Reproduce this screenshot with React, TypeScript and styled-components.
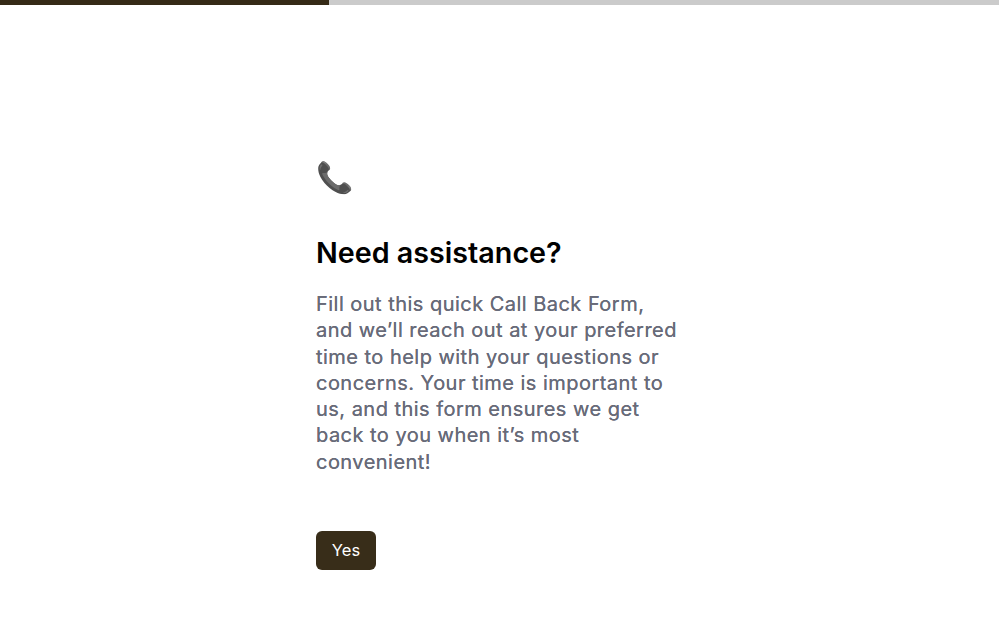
import React from 'react';
import styled, {createGlobalStyle} from 'styled-components';

const GlobalStyle = createGlobalStyle`
  html, body {
    background: #fff;
    margin: 0;
    padding: 0;
  }
`;

const Page = styled.div`
  display: flex;
  flex-direction: column;
  font-family: Inter, "Liberation Sans", sans-serif;
  height: 625px;
  overflow: hidden;
  width: 999px;
`;

const Track = styled.div`
  background: #cbcbcb;
  flex: none;
  height: 5px;
`;

const Fill = styled.div`
  background: #352a16;
  height: 100%;
`;

const Content = styled.main`
  display: flex;
  flex-direction: column;
  align-items: flex-start;
  padding: 155px 0 0 316px;
  width: 366px;
`;

const Emoji = styled.div`
  font-size: 30px;
  height: 42px;
  line-height: 34px;
  opacity: .93;
`;

const Title = styled.h1`
  color: #000;
  font-size: 28.7px;
  font-weight: 600;
  line-height: 36px;
  margin: 33px 0 0;
`;

const Text = styled.p`
  color: #686b79;
  font-size: 20px;
  font-weight: 400;
  letter-spacing: .47px;
  line-height: 26.25px;
  margin: 20px 0 0;
  text-shadow: 0 0 .5px #686b79;
`;

const YesButton = styled.button`
  background: #382d19;
  border: 0;
  border-radius: 6px;
  color: #fff;
  font-family: inherit;
  font-size: 16.5px;
  font-weight: 400;
  height: 39px;
  margin-top: 56px;
  padding: 0;
  width: 60px;
`;

export default function App () {
  return (
    <Page>
      <GlobalStyle />
      <Track>
        <Fill style={{width: `${(329 / 999) * 100}%`}} />
      </Track>
      <Content>
        <Emoji>📞</Emoji>
        <Title>Need assistance?</Title>
        <Text>
          Fill out this quick Call Back Form, and we’ll reach out at your preferred time to help with your questions or concerns. Your time is important to us, and this form ensures we get back to you when it’s most convenient!
        </Text>
        <YesButton>Yes</YesButton>
      </Content>
    </Page>
  );
}
